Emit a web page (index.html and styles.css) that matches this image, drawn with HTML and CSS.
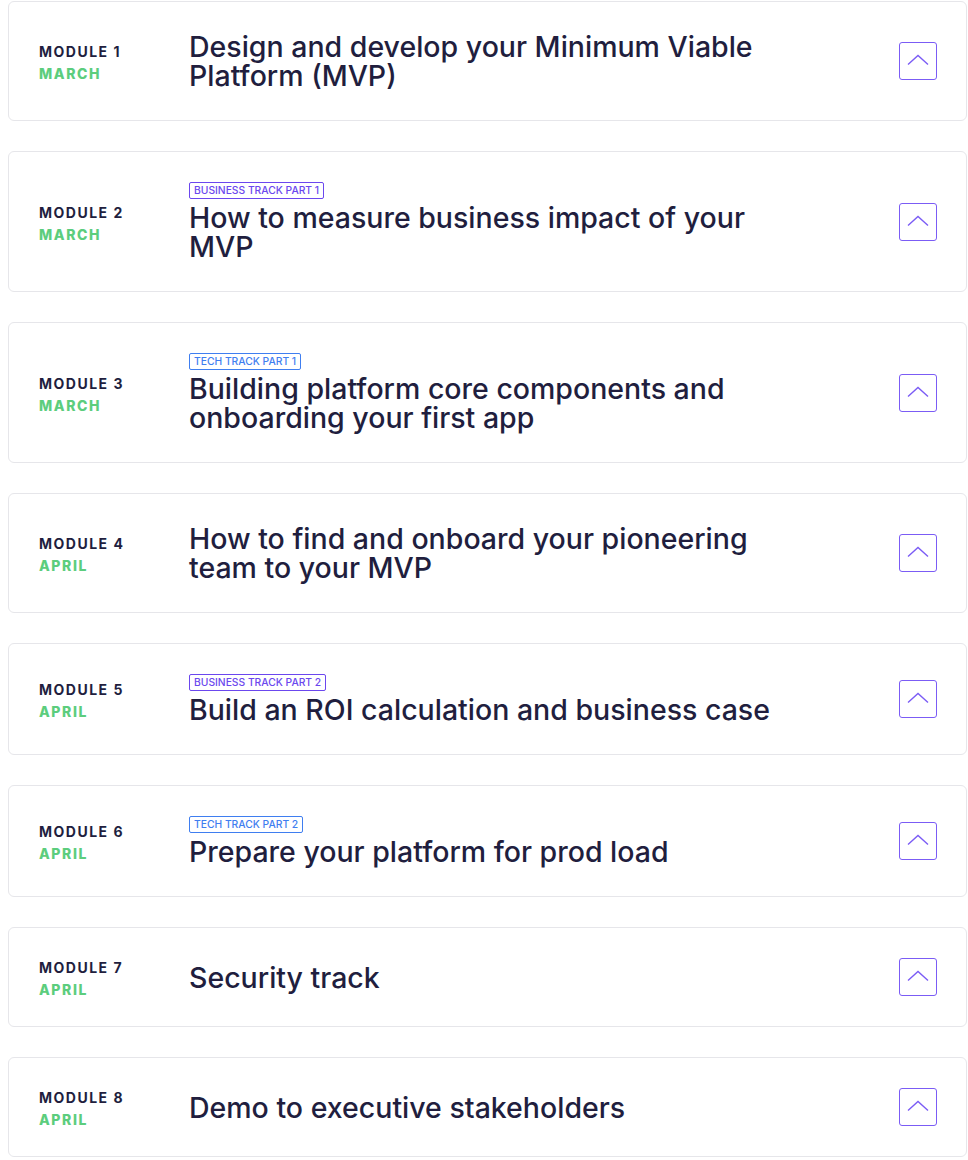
FILE: index.html
```html
<!DOCTYPE html>
<html lang="en">
<head>
<meta charset="utf-8">
<title>Modules</title>
<link rel="stylesheet" href="styles.css">
</head>
<body>
<div class="list">
  <div class="card">
    <div class="meta"><div class="mod">MODULE 1</div><div class="month">MARCH</div></div>
    <div class="body"><h3 class="title">Design and develop your Minimum Viable Platform (MVP)</h3></div>
    <button class="toggle" aria-label="Collapse"><svg width="22" height="12" viewBox="0 0 22 12"><path d="M1 10.5 L11 1.5 L21 10.5" fill="none" stroke="#7b5cf5" stroke-width="1.4"/></svg></button>
  </div>
  <div class="card">
    <div class="meta"><div class="mod">MODULE 2</div><div class="month">MARCH</div></div>
    <div class="body"><span class="badge badge-biz">BUSINESS TRACK PART 1</span><h3 class="title">How to measure business impact of your MVP</h3></div>
    <button class="toggle" aria-label="Collapse"><svg width="22" height="12" viewBox="0 0 22 12"><path d="M1 10.5 L11 1.5 L21 10.5" fill="none" stroke="#7b5cf5" stroke-width="1.4"/></svg></button>
  </div>
  <div class="card">
    <div class="meta"><div class="mod">MODULE 3</div><div class="month">MARCH</div></div>
    <div class="body"><span class="badge badge-tech">TECH TRACK PART 1</span><h3 class="title">Building platform core components and onboarding your first app</h3></div>
    <button class="toggle" aria-label="Collapse"><svg width="22" height="12" viewBox="0 0 22 12"><path d="M1 10.5 L11 1.5 L21 10.5" fill="none" stroke="#7b5cf5" stroke-width="1.4"/></svg></button>
  </div>
  <div class="card">
    <div class="meta"><div class="mod">MODULE 4</div><div class="month">APRIL</div></div>
    <div class="body"><h3 class="title">How to find and onboard your pioneering team to your MVP</h3></div>
    <button class="toggle" aria-label="Collapse"><svg width="22" height="12" viewBox="0 0 22 12"><path d="M1 10.5 L11 1.5 L21 10.5" fill="none" stroke="#7b5cf5" stroke-width="1.4"/></svg></button>
  </div>
  <div class="card">
    <div class="meta"><div class="mod">MODULE 5</div><div class="month">APRIL</div></div>
    <div class="body"><span class="badge badge-biz">BUSINESS TRACK PART 2</span><h3 class="title">Build an ROI calculation and business case</h3></div>
    <button class="toggle" aria-label="Collapse"><svg width="22" height="12" viewBox="0 0 22 12"><path d="M1 10.5 L11 1.5 L21 10.5" fill="none" stroke="#7b5cf5" stroke-width="1.4"/></svg></button>
  </div>
  <div class="card">
    <div class="meta"><div class="mod">MODULE 6</div><div class="month">APRIL</div></div>
    <div class="body"><span class="badge badge-tech">TECH TRACK PART 2</span><h3 class="title">Prepare your platform for prod load</h3></div>
    <button class="toggle" aria-label="Collapse"><svg width="22" height="12" viewBox="0 0 22 12"><path d="M1 10.5 L11 1.5 L21 10.5" fill="none" stroke="#7b5cf5" stroke-width="1.4"/></svg></button>
  </div>
  <div class="card">
    <div class="meta"><div class="mod">MODULE 7</div><div class="month">APRIL</div></div>
    <div class="body"><h3 class="title">Security track</h3></div>
    <button class="toggle" aria-label="Collapse"><svg width="22" height="12" viewBox="0 0 22 12"><path d="M1 10.5 L11 1.5 L21 10.5" fill="none" stroke="#7b5cf5" stroke-width="1.4"/></svg></button>
  </div>
  <div class="card">
    <div class="meta"><div class="mod">MODULE 8</div><div class="month">APRIL</div></div>
    <div class="body"><h3 class="title">Demo to executive stakeholders</h3></div>
    <button class="toggle" aria-label="Collapse"><svg width="22" height="12" viewBox="0 0 22 12"><path d="M1 10.5 L11 1.5 L21 10.5" fill="none" stroke="#7b5cf5" stroke-width="1.4"/></svg></button>
  </div>
</div>
</body>
</html>
```

FILE: styles.css
```css
html, body {
  margin: 0;
  padding: 0;
  background: #ffffff;
}
body {
  padding: 1px 0 0 8px;
  font-family: Inter, "Noto Sans", "Liberation Sans", sans-serif;
  color: #211e3e;
}
.list {
  display: flex;
  flex-direction: column;
  gap: 30px;
  width: 959px;
}
.card {
  display: flex;
  align-items: center;
  padding: 30px 29px 30px 30px;
  border: 1px solid #e6e6ea;
  border-radius: 6px;
  background: #fff;
}
.meta {
  width: 150px;
  flex-shrink: 0;
  margin: -4px 0 -6px;
  padding-top: 2px;
}
.mod {
  font-size: 14px;
  font-weight: 700;
  letter-spacing: 1.5px;
  line-height: 22px;
  color: #211e3e;
}
.month {
  font-size: 14px;
  font-weight: 800;
  letter-spacing: 1.6px;
  line-height: 22px;
  color: #5ccd7d;
}
.body {
  flex: 1;
  display: flex;
  flex-direction: column;
  align-items: flex-start;
}
.title {
  margin: 0;
  max-width: 600px;
  font-size: 28.5px;
  font-weight: 500;
  line-height: 29px;
  letter-spacing: 0;
  color: #211e3e;
}
.badge {
  display: inline-block;
  font-size: 10.3px;
  font-weight: 500;
  line-height: 15px;
  padding: 0 4px;
  border: 1px solid currentColor;
  border-radius: 2px;
  margin-bottom: 4px;
  letter-spacing: 0;
}
.badge-biz { color: #6b47ee; }
.badge-tech { color: #3f7ef0; }
.toggle {
  flex-shrink: 0;
  width: 38px;
  height: 38px;
  padding: 0;
  margin-left: auto;
  border: 1.5px solid #7b5cf5;
  border-radius: 3px;
  background: #fff;
  display: flex;
  align-items: center;
  justify-content: center;
}
.toggle svg { display: block; margin-top: -2px; }
```
